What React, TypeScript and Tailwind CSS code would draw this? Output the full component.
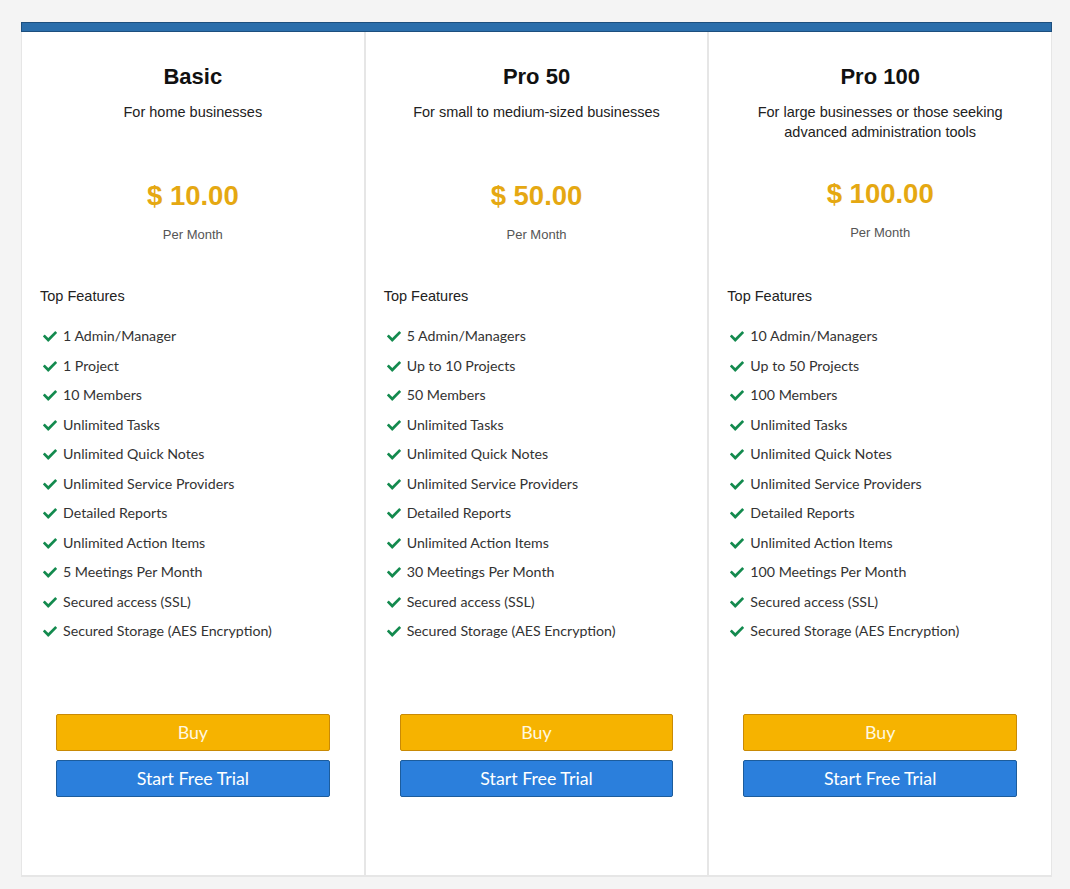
import React from 'react'

type Plan = {
  name: string
  desc: string[]
  price: string
  features: string[]
}

const plans: Plan[] = [
  {
    name: 'Basic',
    desc: ['For home businesses'],
    price: '$ 10.00',
    features: [
      '1 Admin/Manager',
      '1 Project',
      '10 Members',
      'Unlimited Tasks',
      'Unlimited Quick Notes',
      'Unlimited Service Providers',
      'Detailed Reports',
      'Unlimited Action Items',
      '5 Meetings Per Month',
      'Secured access (SSL)',
      'Secured Storage (AES Encryption)',
    ],
  },
  {
    name: 'Pro 50',
    desc: ['For small to medium-sized businesses'],
    price: '$ 50.00',
    features: [
      '5 Admin/Managers',
      'Up to 10 Projects',
      '50 Members',
      'Unlimited Tasks',
      'Unlimited Quick Notes',
      'Unlimited Service Providers',
      'Detailed Reports',
      'Unlimited Action Items',
      '30 Meetings Per Month',
      'Secured access (SSL)',
      'Secured Storage (AES Encryption)',
    ],
  },
  {
    name: 'Pro 100',
    desc: ['For large businesses or those seeking', 'advanced administration tools'],
    price: '$ 100.00',
    features: [
      '10 Admin/Managers',
      'Up to 50 Projects',
      '100 Members',
      'Unlimited Tasks',
      'Unlimited Quick Notes',
      'Unlimited Service Providers',
      'Detailed Reports',
      'Unlimited Action Items',
      '100 Meetings Per Month',
      'Secured access (SSL)',
      'Secured Storage (AES Encryption)',
    ],
  },
]

function Check() {
  return (
    <svg width="14" height="12" viewBox="0 0 512 420" className="shrink-0">
      <path
        fill="#138a4e"
        d="M173.9 408.3L7.5 241.9c-10-10-10-26.2 0-36.2l36.2-36.2c10-10 26.2-10 36.2 0L192 281.6 432.1 41.5c10-10 26.2-10 36.2 0l36.2 36.2c10 10 10 26.2 0 36.2L210.1 408.3c-10 10-26.2 10-36.2 0z"
      />
    </svg>
  )
}

function PlanCard({ plan, first }: { plan: Plan; first: boolean }) {
  const twoLine = plan.desc.length > 1
  return (
    <div className={`flex-1 flex flex-col bg-white ${first ? '' : 'border-l-2 border-[#e6e6e6]'}`}>
      {/* header */}
      <div className="flex flex-col items-center pt-[31px] font-['Liberation_Sans',Arial,sans-serif]">
        <h2 className="text-[22px] leading-[28px] font-bold text-[#111]">{plan.name}</h2>
        <div className="mt-[11px] h-[60px] text-center text-[14.5px] leading-[20px] text-[#222]">
          {plan.desc.map((d) => (
            <div key={d}>{d}</div>
          ))}
        </div>
        <div
          className={`${twoLine ? 'mt-[15px]' : 'mt-[17px]'} text-[27.5px] leading-[34px] font-bold text-[#e5a812]`}
        >
          {plan.price}
        </div>
        <div className="mt-[13px] text-[13px] leading-[18px] text-[#555]">Per Month</div>
      </div>

      {/* features */}
      <div className={`${twoLine ? 'mt-[44px]' : 'mt-[42px]'} px-[18px] font-['Liberation_Sans',Arial,sans-serif] text-[14.5px] leading-[20px] text-[#222]`}>
        Top Features
      </div>
      <ul className="mt-[20px] pl-[21px] flex flex-col gap-[9.5px] font-[Lato,sans-serif] text-[14.2px] leading-[20px] text-[#333]">
        {plan.features.map((f) => (
          <li key={f} className="flex items-center gap-[6px]">
            <Check />
            <span>{f}</span>
          </li>
        ))}
      </ul>

      {/* actions */}
      <div className="mt-[73px] px-[34px] flex flex-col gap-[9px] font-[Lato,sans-serif] text-[17.8px]">
        <button className="h-[37px] rounded-[2px] border border-[#c98a05] bg-[#f6b300] text-[#fff8e0]">
          Buy
        </button>
        <button className="h-[37px] rounded-[2px] border border-[#1c5c9c] bg-[#2b7fdc] text-white">
          Start Free Trial
        </button>
      </div>
      <div className="flex-1" />
    </div>
  )
}

export default function App() {
  return (
    <div className="min-h-screen bg-[#f4f4f4] pt-[22px] px-[21px] pb-[12px] w-[1070px] h-[889px]">
      <div className="w-[1031px] flex flex-col">
        <div className="h-[10px] bg-[#2b6eab] border border-[#1d4f7e]" />
        <div className="flex h-[845px] border-b-2 border-x border-[#e6e6e6]">
          {plans.map((p, i) => (
            <PlanCard key={p.name} plan={p} first={i === 0} />
          ))}
        </div>
      </div>
    </div>
  )
}
